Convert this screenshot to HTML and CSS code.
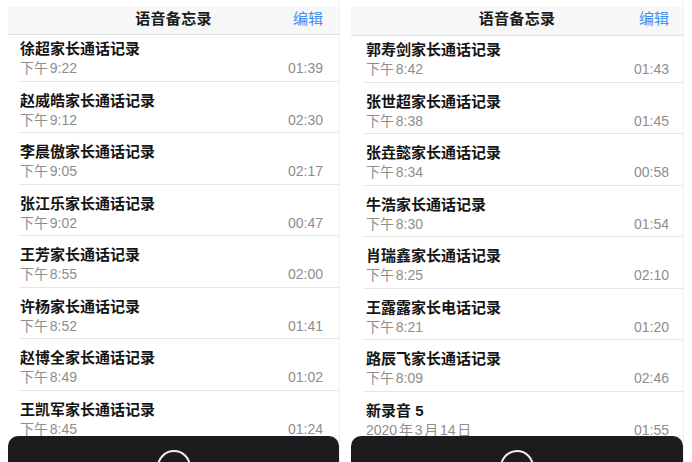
FILE: index.html
```html
<!DOCTYPE html>
<html lang="zh-CN">
<head>
<meta charset="utf-8">
<title>语音备忘录</title>
<link rel="stylesheet" href="styles.css">
</head>
<body>
<div class="screens">
  <section class="panel panel-left">
    <header class="nav">
      <span class="nav-title">语音备忘录</span>
      <span class="nav-edit">编辑</span>
    </header>
    <ul class="list">
      <li class="row"><div class="name">徐超家长通话记录</div><div class="meta"><span>下午9:22</span><span>01:39</span></div></li>
      <li class="row"><div class="name">赵威皓家长通话记录</div><div class="meta"><span>下午9:12</span><span>02:30</span></div></li>
      <li class="row"><div class="name">李晨傲家长通话记录</div><div class="meta"><span>下午9:05</span><span>02:17</span></div></li>
      <li class="row"><div class="name">张江乐家长通话记录</div><div class="meta"><span>下午9:02</span><span>00:47</span></div></li>
      <li class="row"><div class="name">王芳家长通话记录</div><div class="meta"><span>下午8:55</span><span>02:00</span></div></li>
      <li class="row"><div class="name">许杨家长通话记录</div><div class="meta"><span>下午8:52</span><span>01:41</span></div></li>
      <li class="row"><div class="name">赵博全家长通话记录</div><div class="meta"><span>下午8:49</span><span>01:02</span></div></li>
      <li class="row"><div class="name">王凯军家长通话记录</div><div class="meta"><span>下午8:45</span><span>01:24</span></div></li>
    </ul>
    <div class="bar"><span class="ring"></span></div>
  </section>
  <section class="panel panel-right">
    <header class="nav">
      <span class="nav-title">语音备忘录</span>
      <span class="nav-edit">编辑</span>
    </header>
    <ul class="list">
      <li class="row"><div class="name">郭寿剑家长通话记录</div><div class="meta"><span>下午8:42</span><span>01:43</span></div></li>
      <li class="row"><div class="name">张世超家长通话记录</div><div class="meta"><span>下午8:38</span><span>01:45</span></div></li>
      <li class="row"><div class="name">张垚懿家长通话记录</div><div class="meta"><span>下午8:34</span><span>00:58</span></div></li>
      <li class="row"><div class="name">牛浩家长通话记录</div><div class="meta"><span>下午8:30</span><span>01:54</span></div></li>
      <li class="row"><div class="name">肖瑞鑫家长通话记录</div><div class="meta"><span>下午8:25</span><span>02:10</span></div></li>
      <li class="row"><div class="name">王露露家长电话记录</div><div class="meta"><span>下午8:21</span><span>01:20</span></div></li>
      <li class="row"><div class="name">路辰飞家长通话记录</div><div class="meta"><span>下午8:09</span><span>02:46</span></div></li>
      <li class="row"><div class="name">新录音 5</div><div class="meta"><span>2020年3月14日</span><span>01:55</span></div></li>
    </ul>
    <div class="bar"><span class="ring"></span></div>
  </section>
</div>
</body>
</html>
```
FILE: styles.css
```css
* { box-sizing: border-box; }
html, body {
  margin: 0;
  padding: 0;
  width: 692px;
  height: 462px;
  overflow: hidden;
  background: #ffffff;
  font-family: "Liberation Sans", "Noto Sans CJK SC", sans-serif;
  color: #141414;
}
.screens {
  display: flex;
  gap: 11px;
  padding-left: 8px;
  height: 462px;
}
.panel {
  width: 332px;
  height: 462px;
  padding-top: 7px;
  display: flex;
  flex-direction: column;
  border-right: 1px solid #f1f1f1;
}
.panel-right { width: 333px; }
.nav {
  height: 28px;
  flex: none;
  background: #f7f7f7;
  border-bottom: 1px solid #dedede;
  display: flex;
  justify-content: center;
  align-items: flex-start;
  position: relative;
}
.panel-right .nav { height: 29px; }
.nav-title {
  font-size: 15px;
  line-height: 24px;
  font-weight: 600;
  color: #1a1a1a;
  letter-spacing: 0.3px;
}
.nav-edit {
  position: absolute;
  right: 16px;
  top: 0;
  font-size: 15px;
  line-height: 24px;
  color: #3a8ef0;
}
.panel-right .nav-edit { right: 14px; }
.list {
  list-style: none;
  margin: 0;
  padding: 0;
  flex: 1;
  overflow: hidden;
}
.row {
  height: 51.5px;
  margin-left: 11px;
  padding: 9px 16px 0 1px;
  border-bottom: 1px solid #e6e6e6;
}
.panel-right .row {
  margin-left: 13px;
  padding: 9px 14px 0 2px;
}
.row:first-child {
  height: 46.5px;
  padding-top: 4px;
}
.name {
  font-size: 15px;
  line-height: 20px;
  font-weight: 600;
  color: #151515;
}
.meta {
  display: flex;
  justify-content: space-between;
  font-size: 14px;
  line-height: 18px;
  color: #8e8e8e;
  text-autospace: normal;
}
.bar {
  flex: none;
  height: 26px;
  background: #1c1c1e;
  border-radius: 10px 10px 0 0;
  display: flex;
  justify-content: center;
  padding-top: 14px;
  overflow: hidden;
}
.ring {
  width: 34px;
  height: 34px;
  border: 2.5px solid #f2f2f2;
  border-radius: 50%;
  flex: none;
}
```
